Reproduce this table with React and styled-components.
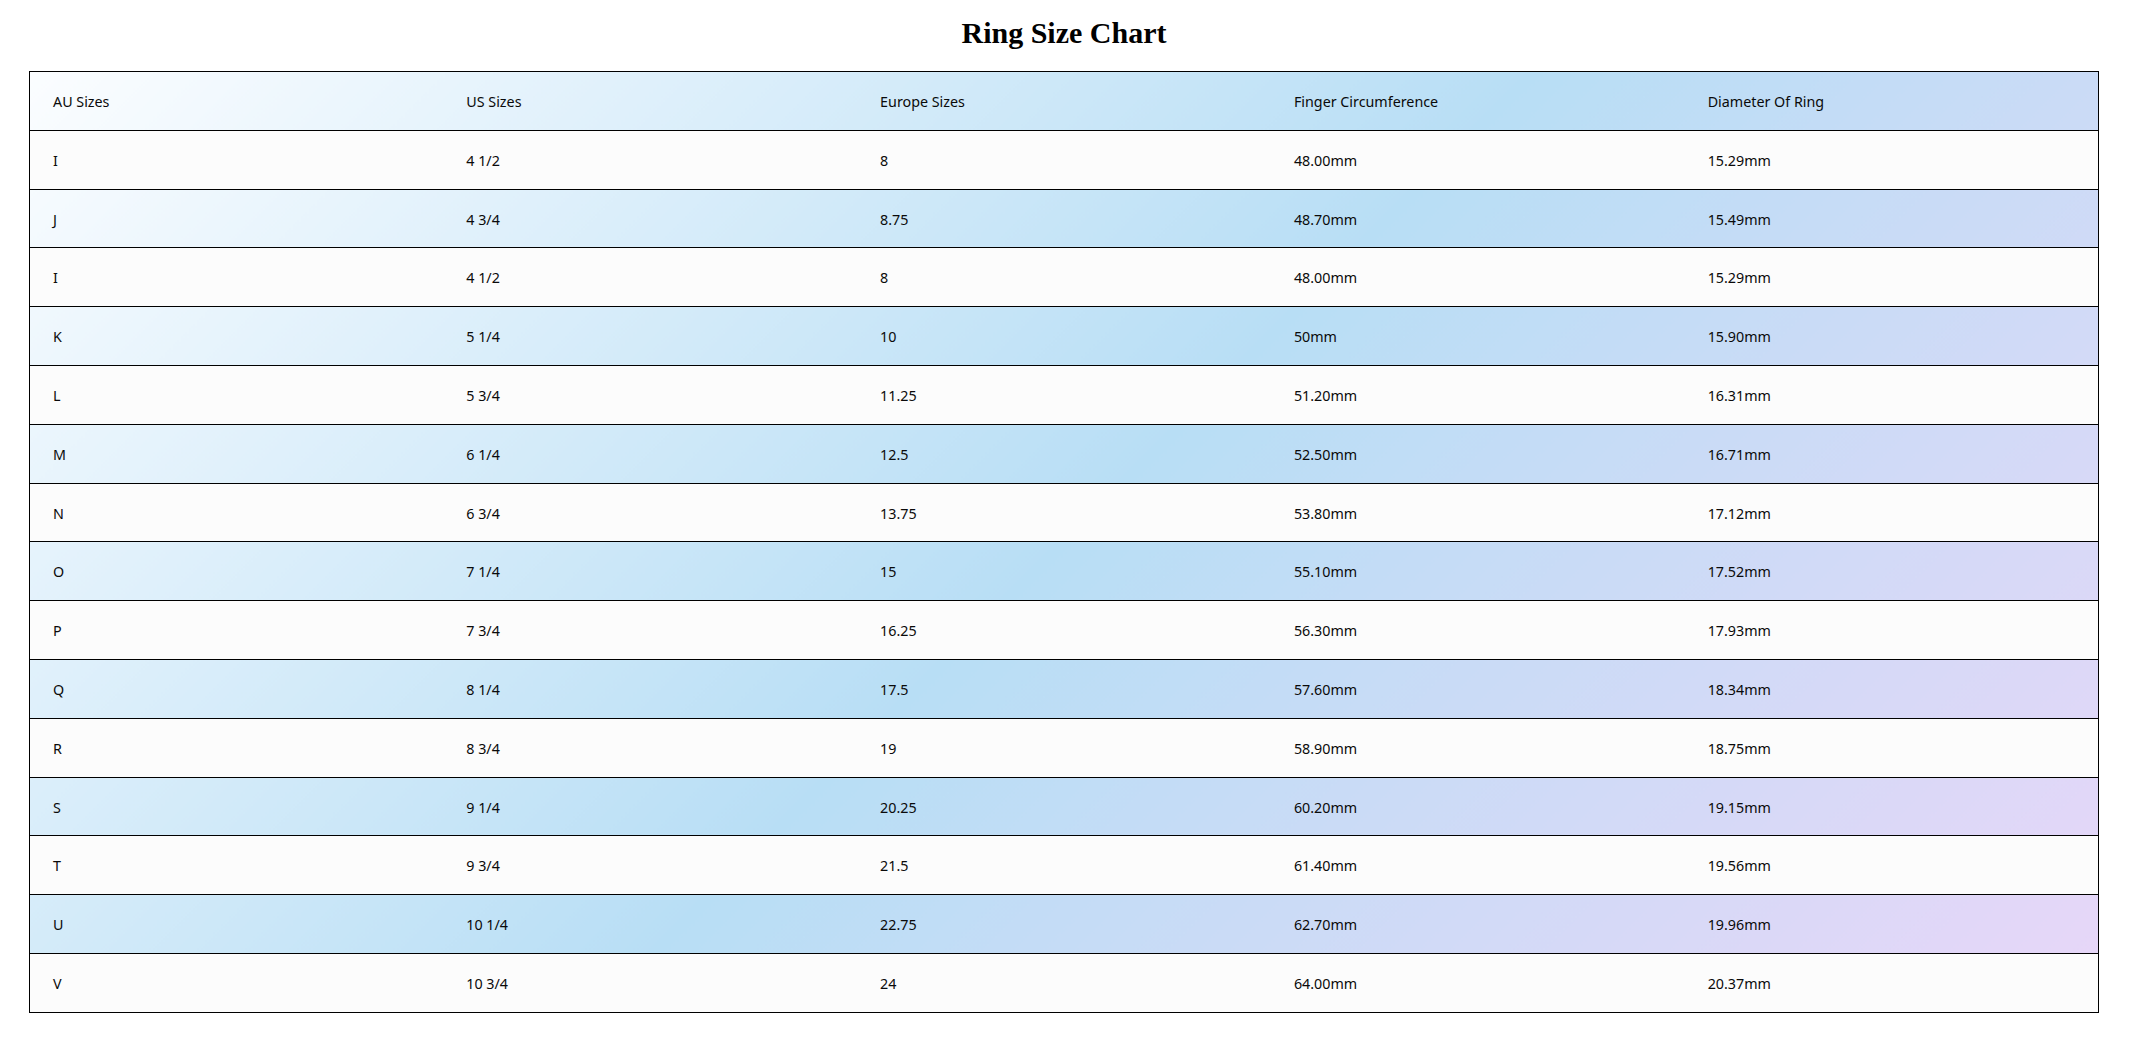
import React from "react";
import styled, { createGlobalStyle } from "styled-components";

const GlobalStyle = createGlobalStyle`
  html, body {
    margin: 0;
    padding: 0;
    background: #ffffff;
  }
  body {
    font-family: "Noto Sans", "Open Sans", sans-serif;
    color: #111;
  }
`;

const headers = [
  "AU Sizes",
  "US Sizes",
  "Europe Sizes",
  "Finger Circumference",
  "Diameter Of Ring",
];

const rows = [
  ["I", "4 1/2", "8", "48.00mm", "15.29mm"],
  ["J", "4 3/4", "8.75", "48.70mm", "15.49mm"],
  ["I", "4 1/2", "8", "48.00mm", "15.29mm"],
  ["K", "5 1/4", "10", "50mm", "15.90mm"],
  ["L", "5 3/4", "11.25", "51.20mm", "16.31mm"],
  ["M", "6 1/4", "12.5", "52.50mm", "16.71mm"],
  ["N", "6 3/4", "13.75", "53.80mm", "17.12mm"],
  ["O", "7 1/4", "15", "55.10mm", "17.52mm"],
  ["P", "7 3/4", "16.25", "56.30mm", "17.93mm"],
  ["Q", "8 1/4", "17.5", "57.60mm", "18.34mm"],
  ["R", "8 3/4", "19", "58.90mm", "18.75mm"],
  ["S", "9 1/4", "20.25", "60.20mm", "19.15mm"],
  ["T", "9 3/4", "21.5", "61.40mm", "19.56mm"],
  ["U", "10 1/4", "22.75", "62.70mm", "19.96mm"],
  ["V", "10 3/4", "24", "64.00mm", "20.37mm"],
];

const App = () => {
  return (
    <>
      <GlobalStyle />
      <Page>
        <Title>Ring Size Chart</Title>
        <Table>
          <thead>
            <tr>
              {headers.map((h) => (
                <HeadCell key={h}>{h}</HeadCell>
              ))}
            </tr>
          </thead>
          <tbody>
            {rows.map((row, i) => (
              <Row key={i} $plain={i % 2 === 0}>
                {row.map((cell, j) => (
                  <Cell key={j}>{cell}</Cell>
                ))}
              </Row>
            ))}
          </tbody>
        </Table>
      </Page>
    </>
  );
};

const Page = styled.main`
  width: 2070px;
  padding: 16px 0 0 29px;
  display: flex;
  flex-direction: column;
  align-items: stretch;
`;

const Title = styled.h1`
  margin: 0 0 21px;
  font-family: "Liberation Serif", "Times New Roman", serif;
  font-weight: 700;
  font-size: 30px;
  line-height: 34px;
  text-align: center;
  color: #000;
`;

const Table = styled.table`
  width: 100%;
  table-layout: fixed;
  border-collapse: collapse;
  border: 1px solid #000;
  background: linear-gradient(
    135deg,
    #fbfdff 0%,
    #b8def5 50%,
    #e8d6f8 100%
  );
`;

const HeadCell = styled.th`
  padding: 21px 23px 19px;
  line-height: 17.8px;
  font-size: 14.3px;
  font-weight: 400;
  text-align: left;
  color: #0a0a0a;
  border-bottom: 1px solid #000;
`;

const Row = styled.tr`
  background: ${(p) => (p.$plain ? "#fcfcfc" : "transparent")};
  border-bottom: 1px solid #000;
`;

const Cell = styled.td`
  padding: 21px 23px 19px;
  line-height: 17.8px;
  font-size: 14.3px;
  color: #0a0a0a;
`;

export default App;
